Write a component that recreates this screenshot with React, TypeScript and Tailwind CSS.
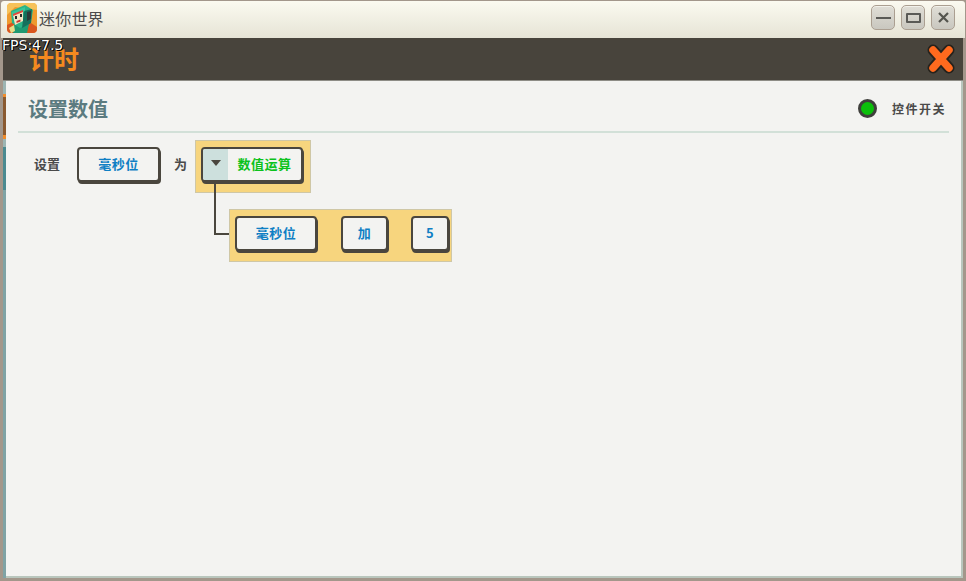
import type { ReactNode } from "react";

const cjk = "font-['Noto_Sans_CJK_SC','Noto_Sans',sans-serif]";

function GameIcon() {
  return (
    <svg width="30" height="30" viewBox="0 0 30 30" className="rounded-[4px]">
      <rect width="30" height="30" rx="4" fill="#ee9a2e" />
      <path d="M0 0h30v7L8 4 0 12z" fill="#f6c25a" />
      <path d="M0 22l8-4 16 2 6 4v6H0z" fill="#d9571f" />
      {/* body */}
      <path d="M7 22l10-3 5 2-2 9H6z" fill="#1f9a72" />
      <path d="M2 25l5-3 1 6-4 2z" fill="#e8df8a" />
      {/* head */}
      <path d="M4 8l14-6 8 5-2 13-11 5-8-5z" fill="#2bb487" />
      <path d="M17 8l8-2-1 14-9 5z" fill="#15705c" />
      <path d="M5 9l13-5 0 4-13 5z" fill="#39c79a" />
      <path d="M6 12l10-4 0 10-8 4z" fill="#f3e6c4" />
      <path d="M6 11l10-4 0 2-10 4z" fill="#e2483c" />
      <rect x="8" y="13" width="2" height="3" fill="#2a2a2a" />
      <rect x="13" y="11" width="2" height="3" fill="#2a2a2a" />
      <path d="M9.5 18l4-1.5 0 2-4 1.5z" fill="#c9362c" />
      <path d="M20 9l4-1 0 8-4 2z" fill="#2d3a38" />
    </svg>
  );
}

function WinButton({ children }: { children: ReactNode }) {
  return (
    <div className="w-[24px] h-[25px] flex items-center justify-center rounded-[5px] border border-[#ab9f91] bg-gradient-to-b from-[#e0ded6] to-[#c9c7bf] shadow-[inset_0_1px_0_#f2f1ea]">
      {children}
    </div>
  );
}

function Slot({ w, color = "text-[#0f7fc4]", children }: { w: string; color?: string; children: ReactNode }) {
  return (
    <div
      className={`${w} h-[35px] flex items-center justify-center rounded-[4px] border-2 border-[#4a463e] bg-[#f3f3f1] shadow-[1px_2px_0_#4a463e] pb-[2px] text-[13px] font-bold tracking-[0.5px] ${color}`}
    >
      {children}
    </div>
  );
}

export default function App() {
  return (
    <div className={`${cjk} w-[966px] h-[581px] flex flex-col overflow-hidden bg-[#a3978b] pt-px`}>
      {/* title bar */}
      <div className="h-[37px] mx-px flex items-start justify-between bg-gradient-to-b from-[#fbfaf0] to-[#e6e4d6] pl-[6px] pr-[10px] rounded-t-[3px]">
        <div className="flex items-center gap-[2px] mt-[2px]">
          <GameIcon />
          <span className="text-[16px] leading-none text-[#4b4b4b] tracking-[0.2px]">迷你世界</span>
        </div>
        <div className="flex items-center gap-[6px] mt-[4px]">
          <WinButton>
            <div className="w-[15px] h-[2px] bg-[#5a5a56]" />
          </WinButton>
          <WinButton>
            <div className="w-[15px] h-[10px] border-2 border-[#5a5a56] rounded-[1px]" />
          </WinButton>
          <WinButton>
            <svg width="13" height="13" viewBox="0 0 13 13">
              <path d="M2 2l9 9M11 2l-9 9" stroke="#55554f" strokeWidth="2.2" />
            </svg>
          </WinButton>
        </div>
      </div>

      {/* dark header */}
      <div className="relative h-[42px] mx-[3px] flex items-center justify-between bg-[#48443c] pl-[26px] pr-[7px] shadow-[0_1px_0_#8d8c86]">
        <span className="text-[25px] font-bold leading-none text-[#f58a1f] mt-[-1px]">计时</span>
        <svg width="30" height="32" viewBox="0 0 30 32" className="mt-[-1px]">
          <path d="M7 7l16 18M23 7L7 25" stroke="#26221c" strokeWidth="11" strokeLinecap="round" />
          <path d="M7 7l16 18M23 7L7 25" stroke="#ff6a1e" strokeWidth="7.5" strokeLinecap="round" />
        </svg>
        <span className="absolute left-[-1px] top-[-2px] font-['DejaVu_Sans',sans-serif] text-[14px] leading-[18px] text-white [text-shadow:1px_1px_0_#000,-1px_0_0_#000]">
          FPS:47.5
        </span>
      </div>

      {/* panel */}
      <div className="flex-1 flex min-h-0 mt-px">
        <div className="w-[3px] ml-[3px] mb-[3px] flex flex-col">
          <div className="h-[13px] bg-[#9db5b3]" />
          <div className="h-[3px] bg-[#f08c2c]" />
          <div className="h-[38px] bg-[#8a5a30]" />
          <div className="h-[4px] bg-[#f08c2c]" />
          <div className="h-[8px] bg-[#9db5b3]" />
          <div className="h-[43px] bg-[#4b8a90]" />
          <div className="flex-1 bg-[#7fa3a5]" />
        </div>
        <div className="flex-1 flex flex-col mb-[3px] mr-[3px] bg-[#f3f3f1] border-r-2 border-b-2 border-[#b9c6bd]">
          {/* heading */}
          <div className="h-[52px] mx-[12px] flex items-center justify-between border-b-2 border-[#d2e0d8] pl-[10px] pr-[2px]">
            <span className="text-[20px] font-bold leading-none text-[#5b7b80] mt-[5px]">设置数值</span>
            <div className="flex items-center gap-[15px] mt-[5px]">
              <div className="w-[19px] h-[19px] ml-[-1px] rounded-full border-[3px] border-[#3f3f3c] bg-[#0bbf0b]" />
              <span className="text-[12px] font-bold tracking-[1.5px] text-[#4a4a4a] mr-px mt-px">控件开关</span>
            </div>
          </div>

          {/* first row */}
          <div className="relative mt-[7px] ml-[28px] flex items-start">
            <span className="mt-[14px] w-[43px] text-[13px] font-bold leading-[20px] text-[#4a4a4a]">设置</span>
            <div className="mt-[7px]">
              <Slot w="w-[83px]">毫秒位</Slot>
            </div>
            <span className="mt-[14px] ml-[14px] w-[21px] text-[13px] font-bold leading-[20px] text-[#4a4a4a]">为</span>
            <div className="w-[116px] h-[53px] bg-[#f7d57e] border border-[#cfc7a6] pl-[5px] pt-[6px]">
              <div className="w-[102px] h-[35px] flex items-center rounded-[4px] border-2 border-[#4a463e] bg-[#f3f3f1] shadow-[1px_2px_0_#4a463e]">
                <div className="w-[25px] h-full flex items-center justify-center bg-[#cde0dd] rounded-l-[2px]">
                  <div className="w-0 h-0 border-x-[5px] border-x-transparent border-t-[6px] border-t-[#4a463e] mb-[4px]" />
                </div>
                <span className="flex-1 text-center text-[13px] font-bold tracking-[0.5px] text-[#0cc21c] pb-[2px]">数值运算</span>
              </div>
            </div>
            {/* connector */}
            <div className="absolute left-[180px] top-[43px] w-[15px] h-[52px] border-l-2 border-b-2 border-[#4a463e]" />
          </div>

          {/* second row */}
          <div className="mt-[16px] ml-[223px] w-[223px] h-[53px] flex items-start bg-[#f7d57e] border border-[#cfc7a6] pl-[5px] pt-[6px]">
            <Slot w="w-[82px]">毫秒位</Slot>
            <div className="ml-[24px]">
              <Slot w="w-[47px]">加</Slot>
            </div>
            <div className="ml-[23px]">
              <Slot w="w-[38px]">5</Slot>
            </div>
          </div>
        </div>
      </div>
    </div>
  );
}
